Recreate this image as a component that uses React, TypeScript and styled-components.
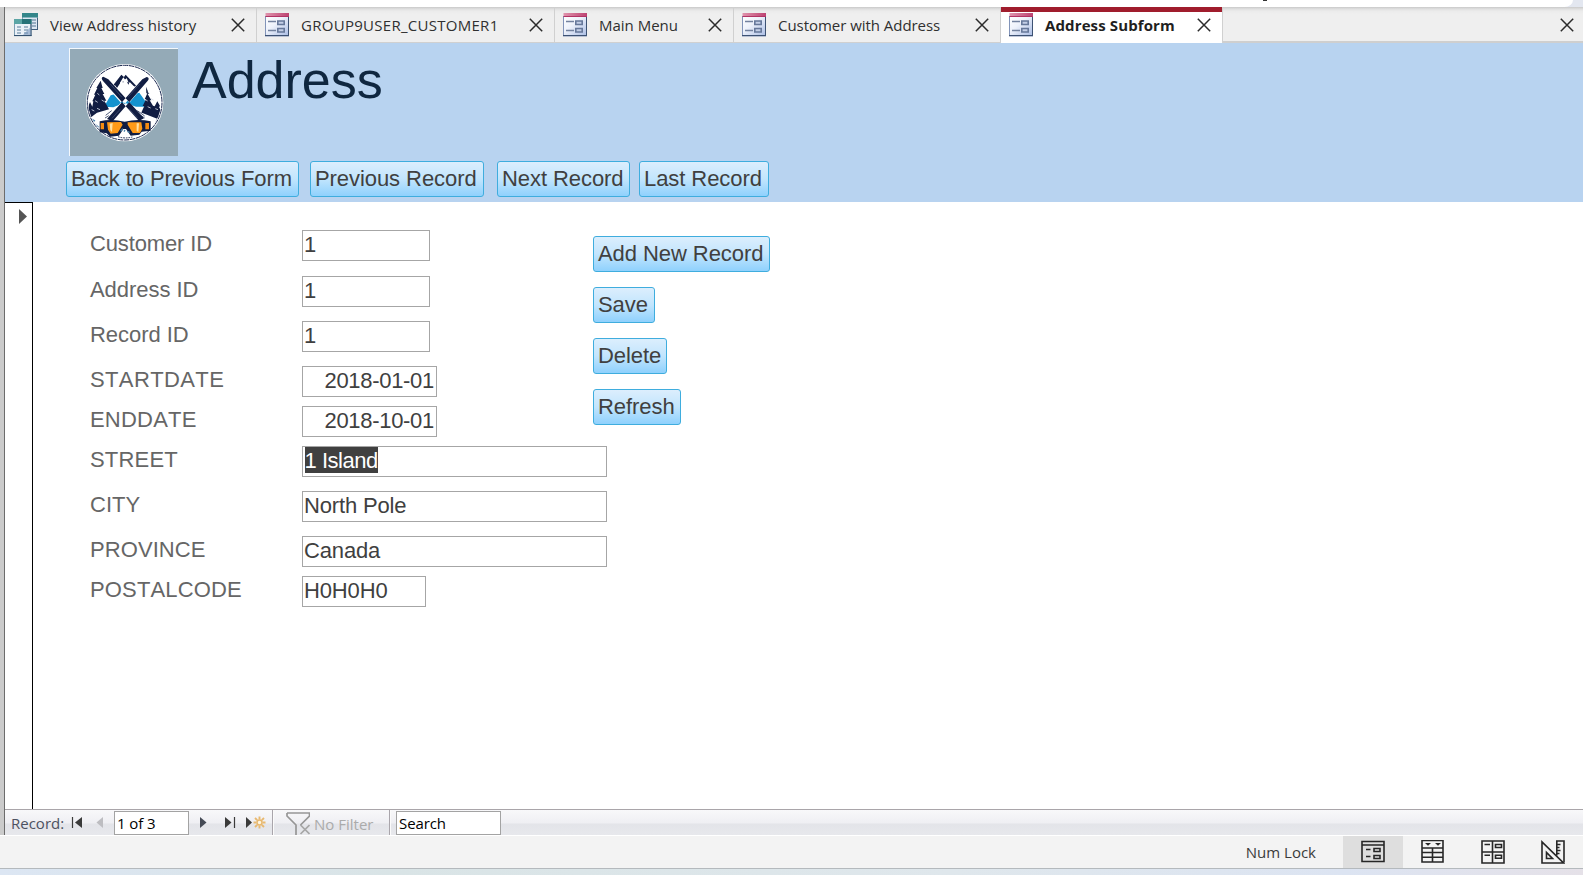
import React from "react";
import styled, { createGlobalStyle } from "styled-components";

const GlobalStyle = createGlobalStyle`
  *, *::before, *::after { box-sizing: border-box; }
  body { margin: 0; overflow: hidden; background: #fff; }
`;

const uiFont = `"Open Sans", "Noto Sans", sans-serif`;
const formFont = `"Liberation Sans", Arial, sans-serif`;

const Screen = styled.div`
  width: 1583px;
  height: 875px;
  display: flex;
  flex-direction: column;
  overflow: hidden;
  background: #fff;
`;

const RibbonEdge = styled.div`
  flex: none;
  height: 7px;
  background: #e3e7f0;
`;

const RibbonPanel = styled.div`
  width: 1573px;
  height: 7px;
  padding-left: 1263px;
  background: #fff;
  border-bottom-right-radius: 10px 8px;
`;

const RibbonMark = styled.div`
  width: 4px;
  height: 1px;
  background: #333;
`;

const Workspace = styled.div`
  flex: none;
  height: 828px;
  display: flex;
`;

const NavPaneEdge = styled.div`
  flex: none;
  width: 5px;
  background: #cbcbcb;
  border-right: 1px solid #6c6c6c;
`;

const DocumentArea = styled.div`
  flex: 1;
  min-width: 0;
  display: flex;
  flex-direction: column;
`;

const TabStrip = styled.div`
  flex: none;
  height: 36px;
  display: flex;
  background: linear-gradient(#c9c9c9, #dfdfdf 2px, #ebebeb 4px, #efefef 7px);
`;

const Tab = styled.div<{ $width: number; $active?: boolean; $first?: boolean }>`
  flex: none;
  width: ${(p) => p.$width}px;
  display: flex;
  align-items: center;
  padding: 0 11px ${(p) => (p.$active ? 1 : 0)}px ${(p) => (p.$first ? 9 : 8)}px;
  border-right: 1px solid #d0d0d0;
  border-bottom: ${(p) => (p.$active ? "none" : "1px solid #d0d0d0")};
  ${(p) => p.$active && "background: linear-gradient(#a01d2d 5px, #fff 5px);"}
`;

const TabTitle = styled.span<{ $bold?: boolean; $tracking?: number }>`
  flex: 1;
  margin-left: 12px;
  font: ${(p) => (p.$bold ? 700 : 400)} 15px/20px ${uiFont};
  letter-spacing: ${(p) => p.$tracking ?? 0}px;
  color: ${(p) => (p.$bold ? "#1f1f1f" : "#303030")};
  white-space: nowrap;
`;

const TabFiller = styled.div`
  flex: 1;
  display: flex;
  align-items: center;
  justify-content: flex-end;
  padding: 2px 9px 0 0;
  border-bottom: 2px solid #cfcfcf;
`;

const FormHeader = styled.header`
  flex: none;
  height: 159px;
  padding: 5px 0 0 61px;
  background: #b8d3f0;
`;

const TitleRow = styled.div`
  display: flex;
  height: 113px;
  padding-left: 3px;
`;

const Title = styled.h1`
  margin: 2px 0 0 14px;
  font: 400 52px/60px ${formFont};
  font-kerning: none;
  color: #0f2740;
`;

const HeaderButtons = styled.div`
  display: flex;
`;

const CommandButton = styled.button<{ $width: number; $after?: number }>`
  display: block;
  flex: none;
  width: ${(p) => p.$width}px;
  height: 36px;
  margin: 0 ${(p) => p.$after ?? 0}px 0 0;
  padding: 0 0 1px 4px;
  border: 1px solid #3fadde;
  border-radius: 3px;
  background: linear-gradient(#dceefd, #c2e5fd 50%, #8fd1fd);
  font: 400 22px/33px ${formFont};
  font-kerning: none;
  letter-spacing: -0.07px;
  color: #404040;
  text-align: left;
  white-space: nowrap;
`;

const FormBody = styled.div`
  flex: 1;
  min-height: 0;
  display: flex;
`;

const RecordSelector = styled.div`
  flex: none;
  width: 28px;
  border: solid #000;
  border-width: 1px 1px 0 0;
  padding: 6px 0 0 14px;
`;

const Fields = styled.div`
  flex: none;
  width: 560px;
  padding: 28px 0 0 57px;
`;

const FieldRow = styled.div<{ $after: number }>`
  display: flex;
  height: 31px;
  margin-bottom: ${(p) => p.$after}px;
`;

const FieldLabel = styled.label<{ $tracking: number }>`
  flex: none;
  width: 212px;
  font: 400 22px/27px ${formFont};
  font-kerning: none;
  letter-spacing: ${(p) => p.$tracking}px;
  color: #666;
`;

const FieldBox = styled.div<{ $width: number; $date?: boolean }>`
  flex: none;
  width: ${(p) => p.$width}px;
  height: 31px;
  padding: 0 ${(p) => (p.$date ? 2 : 1)}px;
  border: 1px solid #a6a6a6;
  font: 400 22px/27px ${formFont};
  font-kerning: none;
  letter-spacing: ${(p) => (p.$date ? -0.3 : -0.15)}px;
  color: #404040;
  text-align: ${(p) => (p.$date ? "right" : "left")};
  white-space: nowrap;
`;

const Selected = styled.span`
  display: inline-block;
  height: 26px;
  margin-left: 0.5px;
  line-height: 27px;
  vertical-align: top;
  letter-spacing: -0.48px;
  background: #404040;
  color: #fff;
`;

const SideButtons = styled.div`
  display: flex;
  flex-direction: column;
  gap: 15px;
  padding-top: 34px;
`;

const RecordBar = styled.div`
  flex: none;
  height: 26px;
  display: flex;
  align-items: stretch;
  overflow: hidden;
  border-top: 1px solid #a9a5a9;
  background: linear-gradient(#f8f8fa, #efeff3 13px, #e3e4e9 14px, #e7e8ec);
  font: 400 15px/23px ${uiFont};
  color: #4c5161;
`;

const RecordText = styled.span`
  width: 58px;
  padding: 2px 0 0 6px;
`;

const RecordInput = styled.div<{ $width: number }>`
  flex: none;
  width: ${(p) => p.$width}px;
  height: 24px;
  margin-top: 1px;
  padding-left: 2px;
  border: 1px solid #a3a3a3;
  background: #fff;
  line-height: 22px;
  letter-spacing: -0.1px;
  color: #000;
`;

const StepGlyph = styled.svg`
  flex: none;
  display: block;
`;

const Separator = styled.div`
  flex: none;
  width: 2px;
  border-left: 1px solid #a9a5ab;
  border-right: 1px solid #fbfbfb;
`;

const FilterState = styled.div`
  flex: none;
  width: 115px;
  display: flex;
  padding-left: 12px;
  color: #ababab;
`;

const FilterText = styled.span`
  padding: 3px 0 0 4px;
`;

const SearchSlot = styled.div`
  padding-left: 5px;
`;

const StatusBar = styled.footer`
  flex: none;
  height: 34px;
  display: flex;
  justify-content: flex-end;
  border-top: 1px solid #fff;
  border-bottom: 1px solid #b4b9bd;
  background: #f3f3f3;
`;

const KeyState = styled.span`
  margin-right: 27px;
  padding-top: 6px;
  font: 400 15px/20px ${uiFont};
  color: #3b3b3b;
`;

const ViewButton = styled.div<{ $active?: boolean }>`
  width: 60px;
  display: flex;
  justify-content: center;
  padding-top: 4px;
  background: ${(p) => (p.$active ? "#dedede" : "transparent")};
`;

const DesktopEdge = styled.div`
  flex: 1;
  background: linear-gradient(90deg, #dce6f3, #d9e4e6 25%, #dfe7ec 60%, #dce4f2 85%, #e5e1e8);
`;

const CloseIcon = () => (
  <svg width="14" height="14" viewBox="0 0 14 14">
    <path d="M.8.8 13.2 13.2M13.2.8.8 13.2" stroke="#2b2b2b" strokeWidth="1.5" />
  </svg>
);

const FormIcon = () => (
  <svg width="24" height="24" viewBox="0 0 24 24">
    <defs>
      <linearGradient id="formBody" x1="0" y1="0" x2="1" y2="1">
        <stop offset="0" stopColor="#fff" />
        <stop offset=".4" stopColor="#eef2fb" />
        <stop offset="1" stopColor="#a9bce4" />
      </linearGradient>
      <linearGradient id="formTop" x1="0" x2="1">
        <stop offset="0" stopColor="#e094ad" />
        <stop offset="1" stopColor="#bd4372" />
      </linearGradient>
    </defs>
    <rect x=".5" y="3.5" width="23" height="19.5" fill="url(#formBody)" stroke="#8294b9" />
    <path d="M0 22.5h24M23.5 4v19" stroke="#3d5273" />
    <rect x="0.500" y="0" width="23.500" height="3" fill="url(#formTop)" />
    <rect x="0.500" y="3" width="23.500" height="1" fill="#b23465" />
    <path d="M3 8.500h8M3 17.500h8" stroke="#73829f" strokeWidth="1.300" />
    <path d="M12.800 8h6.400v3.500h-6.400zM12.800 15.500h6.400v3.500h-6.400z" fill="#c3cee6" stroke="#66789a" strokeWidth="1.600" />
  </svg>
);

const QueryIcon = () => (
  <svg width="24" height="24" viewBox="0 0 24 24">
    <rect x="8.5" y=".5" width="15" height="16" fill="#dce7f3" stroke="#8aa7ba" />
    <path d="M8 16.5h16M23.5 5v12" stroke="#41607e" />
    <rect x="8" y="0" width="16" height="4.5" fill="#33868a" />
    <path d="M18 7h4M18 10h4M18 13h4" stroke="#7f9bb2" strokeWidth="1.5" />
    <rect x=".5" y="6.5" width="16.5" height="16.2" fill="#eaf1f8" stroke="#7f9eb4" />
    <path d="M0 22.5h17.5M17 11v12" stroke="#34516f" />
    <rect x="0" y="6" width="17.5" height="5" fill="#5ba5a5" />
    <rect x="8" y="6" width="9.5" height="5" fill="#267278" />
    <path d="M3 14h4M3 17h4M3 20h4M10 14h4M10 17h4M10 20h4" stroke="#8ba4b9" strokeWidth="1.5" />
    <path d="M9 22h7.500v-8z" fill="#7494bd" opacity=".6" />
  </svg>
);

const SkiLogo = () => (
  <svg width="109" height="108" viewBox="27 24 327 324">
    <defs>
      <clipPath id="badge">
        <circle cx="194" cy="188" r="109" />
      </clipPath>
    </defs>
    <rect x="27" y="24" width="327" height="324" fill="#f4f8fc" />
    <rect x="30" y="27" width="324" height="321" fill="#94aab7" />
    <circle cx="194" cy="188" r="116" fill="#fff" />
    <circle cx="194" cy="188" r="112" fill="#fff" stroke="#1a2850" strokeWidth="3" strokeDasharray="16 2" />
    <g clipPath="url(#badge)">
      <path d="M132 200l20-34 14-4 28 30 26-30 18-4 18 26v16h-28l-34-12-34 14z" fill="#1593cf" />
      <path d="M150 148l34-44 8 7 5-7 40 42-16-8-12-12-4 8-8-18-8 12-4-6-14 22-6-8-8 10z" fill="#111d42" />
      <path d="M180 128l10-16 6 8 4-6 6 14-7-4-4 8-6-9-5 12z" fill="#fff" />
      <path
        d="M122 122l6 22h-4l9 18h-5l11 20h-6l14 26-36 10-29 22v-34l8-20 7 14 3-16h-3l9-20h-4l10-20h-3z
           M258 140l9 22h-4l11 19h-5l10 16 5 2 8-15 8 14-3 3 12 22-5 34-34-26-28-9 11-24h-5l10-20h-4l8-18h-3z"
        fill="#111d42"
      />
      <path
        d="M112 160l6 5m-13 17 8 5m12-7 8 5m-38 24 8 4m8-8 9 4m143-53 6 5m-14 17 8 5m10-7 8 5m-18 19 9 4m14 2 8 3"
        stroke="#d5dbe6"
        strokeWidth="2.5"
      />
      <path d="M82 242c35-10 74-36 112-38 38 4 76 27 112 36l-24 64H100z" fill="#fff" />
      <path d="M89 234l14 8-5 6 16 12-4 8M300 238l-14 15 5 5-18 17" fill="none" stroke="#3f79a5" strokeWidth="4" />
      <path d="M137 226l18-14M135 234l12-7M232 212l22 16M242 226l12 8" stroke="#26365c" strokeWidth="2.5" />
    </g>
    <path d="M127 104c-11-1-10 10-4 17l110 124 16-10L145 115zM261 105c10 1 12 9 5 16L156 248l-18-10L246 116z" fill="#fff" />
    <path d="M130 110c-6 1-6 7-1 13l108 120 15-8L145 118zM260 111c7 1 8 7 2 13L158 244l-17-7L247 118z" fill="#111d42" />
    <path d="M151 132l34 39M239 132l-34 38M207 206l26 29M181 207l-25 28" stroke="#58678a" strokeWidth="1.5" />
    <path d="M119 244q36-8 75 1 40-9 78-1v28l-27 3-7 9-26 3-14-20h-8l-13 20-27 3-10-10-21-3z" fill="#111d42" />
    <path d="M122 249h10v19h-10zM256 249h11v19h-11z" fill="#f68c12" />
    <path d="M141 247l42-1 5 8-15 25-21 2-8-12zM203 247l41 0 3 19-7 13-22 0-15-25z" fill="#ff9a18" />
    <path d="M149 251l9-2-2 27-5-5zM230 250h7l-2 26-5-3z" fill="#ffe0a3" />
    <path d="M182 274l6-8M192 275l3-5M202 274l7 3" stroke="#4e87ad" strokeWidth="4" />
    <path d="M174 290q20 7 43 1" fill="none" stroke="#16264a" strokeWidth="3" strokeDasharray="5 3" />
  </svg>
);

const CurrentRecordMarker = () => (
  <svg width="8" height="15" viewBox="0 0 8 15">
    <path d="M0 0 8 7.5 0 15z" fill="#555" />
  </svg>
);

const RecordSteps = () => (
  <StepGlyph width="51" height="25" viewBox="63 0 51 25">
    <path d="M72.5 7v11" stroke="#3a3a3a" strokeWidth="1.2" />
    <path d="M82 7v11l-7-5.5z" fill="#3a3a3a" />
    <path d="M103 7v11l-6.500-5.500z" fill="#bdbdc1" />
  </StepGlyph>
);

const RecordStepsForward = () => (
  <StepGlyph width="83" height="25" viewBox="189 0 83 25">
    <path d="M200 7v11l6.500-5.500z" fill="#454a55" />
    <path d="M225 7v11l6.500-5.500z" fill="#3a3a3a" />
    <path d="M234.500 7v11" stroke="#3a3a3a" strokeWidth="1.2" />
    <path d="M246 7v11l6-5.500z" fill="#3a3a3a" />
    <circle cx="259.500" cy="12.500" r="2.500" fill="#fff6e3" stroke="#e8b970" strokeWidth="1.5" />
    <path
      d="M259.500 6.500v3M259.500 15.500v3M253.500 12.500h3M262.500 12.500h3M255 8l2.200 2.200M264 8l-2.200 2.200M255 17l2.200-2.200M264 17l-2.200-2.200"
      stroke="#e8b970"
      strokeWidth="1.9"
    />
  </StepGlyph>
);

const FilterIcon = () => (
  <StepGlyph width="24" height="25" viewBox="0 0 24 25">
    <path d="M1 3h22.500v3L14.500 15M1 3v3l9 9v12" fill="none" stroke="#969696" strokeWidth="1.700" />
    <path d="M14.500 15l9 9M23.500 15l-9 9" stroke="#a6a6a6" strokeWidth="1.700" />
  </StepGlyph>
);

const FormViewIcon = () => (
  <svg width="24" height="24" viewBox="0 0 24 24" fill="none" stroke="#262626" strokeWidth="1.600">
    <path d="M1 1.500h22v20H1zM1 5h22M5 9.500h4.500M5 16.500h4.500M13 8.500h6v3h-6zM13 15.500h6v3h-6z" />
  </svg>
);

const DatasheetIcon = () => (
  <svg width="24" height="24" viewBox="0.500 0.500 24 24" fill="none" stroke="#262626" strokeWidth="1.600">
    <path d="M1.500 1h21v21.500h-21zM1.500 8.500h21M1.500 13h21M1.500 17.800h21M12 8.500v14" />
    <path d="M4.500 3.500h6L7.500 6.300zM14.500 3.500h6l-3 2.800z" fill="#262626" stroke="none" />
  </svg>
);

const LayoutIcon = () => (
  <svg width="24" height="24" viewBox="0 0 24 24" fill="none" stroke="#262626" strokeWidth="1.600">
    <path d="M1 1h22v22H1zM1 12h22M11.500 1v22M3.500 4.500H9M3.500 15.200H9M14.500 4.500h6v3h-6zM14.500 15.200h6v3h-6z" />
  </svg>
);

const DesignIcon = () => (
  <svg width="24" height="24" viewBox="0 0 24 24" fill="none" stroke="#262626" strokeWidth="1.600">
    <path d="M1 2v21h21.500zM5.500 12.500v6H11.500z" />
    <path d="M15.800 15.500V1h7.200v21.500M16 4.500h3.500M16 7.500h2.500M16 10.500h3.500M16 13.500h2.500" />
  </svg>
);

type TabInfo = { title: string; width: number; tracking?: number; query?: boolean; active?: boolean };

const tabs: TabInfo[] = [
  { title: "View Address history", width: 252, tracking: 0.04, query: true },
  { title: "GROUP9USER_CUSTOMER1", width: 298, tracking: 0.28 },
  { title: "Main Menu", width: 179 },
  { title: "Customer with Address", width: 267, tracking: -0.04 },
  { title: "Address Subform", width: 222, tracking: 0.12, active: true },
];

type FieldInfo = {
  label: string;
  tracking: number;
  value: string;
  width: number;
  after: number;
  date?: boolean;
  selected?: boolean;
};

const fields: FieldInfo[] = [
  { label: "Customer ID", tracking: -0.13, value: "1", width: 128, after: 15 },
  { label: "Address ID", tracking: -0.05, value: "1", width: 128, after: 14 },
  { label: "Record ID", tracking: -0.05, value: "1", width: 128, after: 14 },
  { label: "STARTDATE", tracking: 0.38, value: "2018-01-01", width: 135, after: 9, date: true },
  { label: "ENDDATE", tracking: 0.2, value: "2018-10-01", width: 135, after: 9, date: true },
  { label: "STREET", tracking: 0.2, value: "1 Island", width: 305, after: 14, selected: true },
  { label: "CITY", tracking: 0, value: "North Pole", width: 305, after: 14 },
  { label: "PROVINCE", tracking: 0.07, value: "Canada", width: 305, after: 9 },
  { label: "POSTALCODE", tracking: 0.15, value: "H0H0H0", width: 124, after: 0 },
];

export default function App() {
  return (
    <Screen>
      <GlobalStyle />
      <RibbonEdge>
        <RibbonPanel>
          <RibbonMark />
        </RibbonPanel>
      </RibbonEdge>
      <Workspace>
        <NavPaneEdge />
        <DocumentArea>
          <TabStrip>
            {tabs.map((tab) => (
              <Tab key={tab.title} $width={tab.width} $active={tab.active} $first={tab.query}>
                {tab.query ? <QueryIcon /> : <FormIcon />}
                <TabTitle $bold={tab.active} $tracking={tab.tracking}>
                  {tab.title}
                </TabTitle>
                <CloseIcon />
              </Tab>
            ))}
            <TabFiller>
              <CloseIcon />
            </TabFiller>
          </TabStrip>
          <FormHeader>
            <TitleRow>
              <SkiLogo />
              <Title>Address</Title>
            </TitleRow>
            <HeaderButtons>
              <CommandButton $width={233} $after={11}>Back to Previous Form</CommandButton>
              <CommandButton $width={174} $after={13}>Previous Record</CommandButton>
              <CommandButton $width={133} $after={9}>Next Record</CommandButton>
              <CommandButton $width={130}>Last Record</CommandButton>
            </HeaderButtons>
          </FormHeader>
          <FormBody>
            <RecordSelector>
              <CurrentRecordMarker />
            </RecordSelector>
            <Fields>
              {fields.map((field) => (
                <FieldRow key={field.label} $after={field.after}>
                  <FieldLabel $tracking={field.tracking}>{field.label}</FieldLabel>
                  <FieldBox $width={field.width} $date={field.date}>
                    {field.selected ? <Selected>{field.value}</Selected> : field.value}
                  </FieldBox>
                </FieldRow>
              ))}
            </Fields>
            <SideButtons>
              <CommandButton $width={177}>Add New Record</CommandButton>
              <CommandButton $width={62}>Save</CommandButton>
              <CommandButton $width={74}>Delete</CommandButton>
              <CommandButton $width={88}>Refresh</CommandButton>
            </SideButtons>
          </FormBody>
          <RecordBar>
            <RecordText>Record:</RecordText>
            <RecordSteps />
            <RecordInput $width={75}>1 of 3</RecordInput>
            <RecordStepsForward />
            <Separator />
            <FilterState>
              <FilterIcon />
              <FilterText>No Filter</FilterText>
            </FilterState>
            <Separator />
            <SearchSlot>
              <RecordInput $width={105}>Search</RecordInput>
            </SearchSlot>
          </RecordBar>
        </DocumentArea>
      </Workspace>
      <StatusBar>
        <KeyState>Num Lock</KeyState>
        <ViewButton $active>
          <FormViewIcon />
        </ViewButton>
        <ViewButton>
          <DatasheetIcon />
        </ViewButton>
        <ViewButton>
          <LayoutIcon />
        </ViewButton>
        <ViewButton>
          <DesignIcon />
        </ViewButton>
      </StatusBar>
      <DesktopEdge />
    </Screen>
  );
}
